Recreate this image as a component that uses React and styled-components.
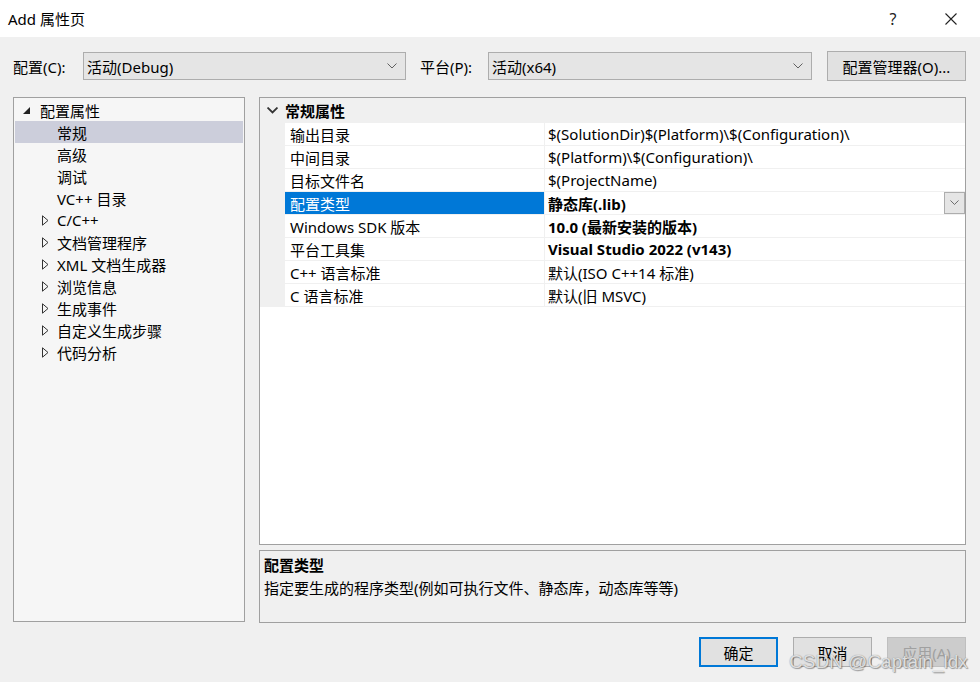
import React from 'react';
import styled, { createGlobalStyle } from 'styled-components';

const GlobalStyle = createGlobalStyle`
  html, body {
    margin: 0;
    padding: 0;
    background: #f0f0f0;
  }
  body {
    font-family: "Noto Sans", "Noto Sans CJK SC", sans-serif;
    font-size: 15px;
    color: #000;
  }
`;

const Window = styled.div`
  position: relative;
  width: 980px;
  height: 682px;
  background: #f0f0f0;
  overflow: hidden;
`;

const TitleBar = styled.div`
  height: 37px;
  background: #ffffff;
  display: flex;
  align-items: center;
  padding-left: 8px;
`;

const Title = styled.div`
  flex: 1;
  font-size: 15px;
`;

const TitleButton = styled.div`
  width: 58px;
  height: 37px;
  display: flex;
  align-items: center;
  justify-content: center;
  font-size: 16px;
  color: #222;
`;

const ConfigRow = styled.div`
  display: flex;
  align-items: center;
  padding: 14px 14px 0 13px;
  height: 30px;
`;

const Label = styled.div`
  width: ${(p) => p.$w}px;
  white-space: nowrap;
  font-size: 15px;
`;

const Combo = styled.div`
  box-sizing: border-box;
  width: ${(p) => p.$w}px;
  height: 28px;
  background: #e5e5e5;
  border: 1px solid #adadad;
  display: flex;
  align-items: center;
  padding: 0 8px 0 3px;
  margin-right: ${(p) => p.$mr || 0}px;
`;

const ComboText = styled.span`
  flex: 1;
`;

const Button = styled.div`
  box-sizing: border-box;
  width: ${(p) => p.$w}px;
  height: 30px;
  display: flex;
  align-items: center;
  justify-content: center;
  background: ${(p) => (p.$disabled ? '#cccccc' : '#e1e1e1')};
  color: ${(p) => (p.$disabled ? '#a0a0a0' : '#000')};
  border: ${(p) => (p.$default ? '2px solid #0078d7' : p.$disabled ? '1px solid #bfbfbf' : '1px solid #adadad')};
  font-size: 15px;
`;

const Main = styled.div`
  display: flex;
  gap: 14px;
  padding: 16px 14px 0 13px;
`;

const Tree = styled.div`
  box-sizing: border-box;
  width: 232px;
  height: 525px;
  background: #f6f6f6;
  border: 1px solid #a0a0a0;
  padding: 1px 1px 0;
`;

const TreeItem = styled.div`
  height: 22px;
  display: flex;
  align-items: center;
  padding-left: ${(p) => p.$indent}px;
  background: ${(p) => (p.$selected ? '#cccedb' : 'transparent')};
  white-space: nowrap;
`;

const Expander = styled.span`
  width: ${(p) => p.$w}px;
  display: flex;
  align-items: center;
`;

const RightCol = styled.div`
  width: 707px;
  display: flex;
  flex-direction: column;
  gap: 5px;
`;

const Grid = styled.div`
  box-sizing: border-box;
  height: 448px;
  background: #ffffff;
  border: 1px solid #a0a0a0;
`;

const Category = styled.div`
  height: 25px;
  background: #f0f0f0;
  display: flex;
  align-items: center;
  font-weight: 700;
`;

const Gutter = styled.div`
  width: 25px;
  flex: none;
  align-self: stretch;
  background: #f0f0f0;
  display: flex;
  align-items: center;
  justify-content: center;
`;

const Row = styled.div`
  height: 23px;
  display: flex;
`;

const NameCell = styled.div`
  box-sizing: border-box;
  width: 260px;
  flex: none;
  padding-left: 5px;
  display: flex;
  align-items: center;
  border-bottom: 1px solid #f0f0f0;
  border-right: 1px solid #f0f0f0;
  background: ${(p) => (p.$selected ? '#0078d7' : '#fff')};
  color: ${(p) => (p.$selected ? '#fff' : '#000')};
  white-space: nowrap;
`;

const ValueCell = styled.div`
  flex: 1;
  display: flex;
  align-items: center;
  padding-left: 3px;
  border-bottom: 1px solid #f0f0f0;
  font-weight: ${(p) => (p.$bold ? 700 : 400)};
  white-space: nowrap;
`;

const ValueText = styled.span`
  flex: 1;
`;

const DropButton = styled.div`
  box-sizing: border-box;
  width: 21px;
  height: 22px;
  background: #e5e5e5;
  border: 1px solid #adadad;
  display: flex;
  align-items: center;
  justify-content: center;
`;

const Desc = styled.div`
  box-sizing: border-box;
  height: 73px;
  border: 1px solid #a0a0a0;
  background: #f0f0f0;
  padding: 3px 4px;
`;

const DescTitle = styled.div`
  font-weight: 700;
  line-height: 22px;
`;

const DescText = styled.div`
  line-height: 24px;
`;

const Footer = styled.div`
  display: flex;
  justify-content: flex-end;
  gap: 15px;
  padding: 14px 14px 0 0;
`;

const Watermark = styled.div`
  position: absolute;
  left: 789px;
  top: 651px;
  font-family: "Liberation Sans", Arial, sans-serif;
  font-size: 19px;
  color: rgba(255, 255, 255, 0.75);
  text-shadow: 0 0 1px #777, 1px 1px 1px rgba(0, 0, 0, 0.35);
  white-space: nowrap;
`;

const Chevron = ({ color = '#606060', w = 10, sw = 1 }) => (
  <svg width={w} height={w * 0.6} viewBox="0 0 10 6">
    <path d="M0.5 0.5 L5 5 L9.5 0.5" fill="none" stroke={color} strokeWidth={sw} />
  </svg>
);

const Close = () => (
  <svg width="12" height="12" viewBox="0 0 12 12">
    <path d="M0.5 0.5 L11.5 11.5 M11.5 0.5 L0.5 11.5" stroke="#222" strokeWidth="1.1" />
  </svg>
);

const Expanded = () => (
  <svg width="7" height="7" viewBox="0 0 7 7">
    <path d="M7 0 L7 7 L0 7 Z" fill="#222" />
  </svg>
);

const Collapsed = () => (
  <svg width="7" height="11" viewBox="0 0 7 11">
    <path d="M0.5 0.8 L6 5.5 L0.5 10.2 Z" fill="none" stroke="#333" strokeWidth="1" />
  </svg>
);

const treeItems = [
  { text: '常规', selected: true },
  { text: '高级' },
  { text: '调试' },
  { text: 'VC++ 目录' },
  { text: 'C/C++', children: true },
  { text: '文档管理程序', children: true },
  { text: 'XML 文档生成器', children: true },
  { text: '浏览信息', children: true },
  { text: '生成事件', children: true },
  { text: '自定义生成步骤', children: true },
  { text: '代码分析', children: true },
];

const props = [
  { name: '输出目录', value: '$(SolutionDir)$(Platform)\\$(Configuration)\\' },
  { name: '中间目录', value: '$(Platform)\\$(Configuration)\\' },
  { name: '目标文件名', value: '$(ProjectName)' },
  { name: '配置类型', value: '静态库(.lib)', bold: true, selected: true },
  { name: 'Windows SDK 版本', value: '10.0 (最新安装的版本)', bold: true },
  { name: '平台工具集', value: 'Visual Studio 2022 (v143)', bold: true },
  { name: 'C++ 语言标准', value: '默认(ISO C++14 标准)' },
  { name: 'C 语言标准', value: '默认(旧 MSVC)' },
];

export default function App() {
  return (
    <Window>
      <GlobalStyle />
      <TitleBar>
        <Title>Add 属性页</Title>
        <TitleButton>?</TitleButton>
        <TitleButton>
          <Close />
        </TitleButton>
      </TitleBar>

      <ConfigRow>
        <Label $w={70}>配置(C):</Label>
        <Combo $w={323} $mr={14}>
          <ComboText>活动(Debug)</ComboText>
          <Chevron />
        </Combo>
        <Label $w={68}>平台(P):</Label>
        <Combo $w={324} $mr={15}>
          <ComboText>活动(x64)</ComboText>
          <Chevron />
        </Combo>
        <Button $w={139}>配置管理器(O)...</Button>
      </ConfigRow>

      <Main>
        <Tree>
          <TreeItem $indent={8}>
            <Expander $w={17}>
              <Expanded />
            </Expander>
            配置属性
          </TreeItem>
          {treeItems.map((it) => (
            <TreeItem key={it.text} $indent={it.children ? 27 : 42} $selected={it.selected}>
              {it.children && (
                <Expander $w={15}>
                  <Collapsed />
                </Expander>
              )}
              {it.text}
            </TreeItem>
          ))}
        </Tree>

        <RightCol>
          <Grid>
            <Category>
              <Gutter>
                <Chevron color="#333" w={11} sw={1.6} />
              </Gutter>
              常规属性
            </Category>
            {props.map((p) => (
              <Row key={p.name}>
                <Gutter />
                <NameCell $selected={p.selected}>{p.name}</NameCell>
                <ValueCell $bold={p.bold}>
                  <ValueText>{p.value}</ValueText>
                  {p.selected && (
                    <DropButton>
                      <Chevron w={9} />
                    </DropButton>
                  )}
                </ValueCell>
              </Row>
            ))}
          </Grid>
          <Desc>
            <DescTitle>配置类型</DescTitle>
            <DescText>指定要生成的程序类型(例如可执行文件、静态库，动态库等等)</DescText>
          </Desc>
        </RightCol>
      </Main>

      <Footer>
        <Button $w={79} $default>确定</Button>
        <Button $w={79}>取消</Button>
        <Button $w={79} $disabled>应用(A)</Button>
      </Footer>

      <Watermark>CSDN @Captain_ldx</Watermark>
    </Window>
  );
}
